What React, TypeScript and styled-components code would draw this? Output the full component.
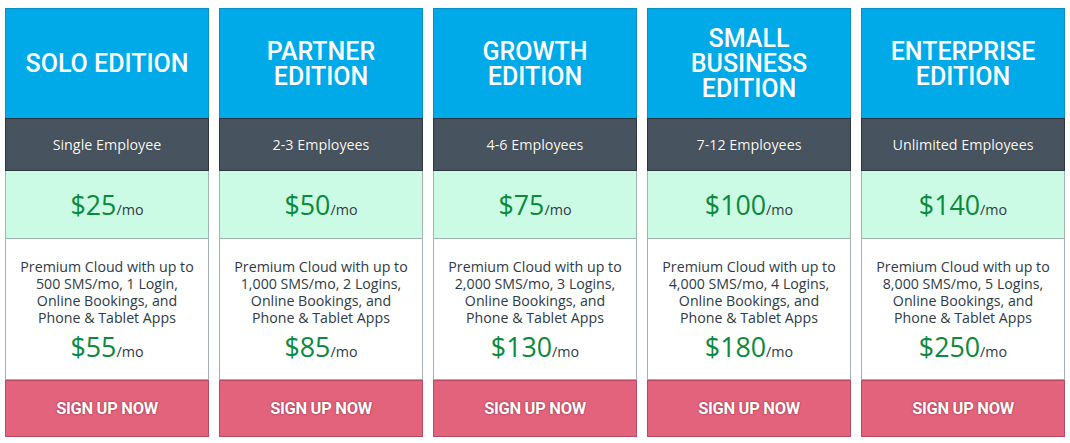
import React from "react";
import styled, { createGlobalStyle } from "styled-components";

const Global = createGlobalStyle`
  html, body { margin: 0; padding: 0; background: #ffffff; }
  body { font-family: "Open Sans", "Liberation Sans", sans-serif; }
`;

const Page = styled.div`
  display: grid;
  grid-template-columns: repeat(5, 204px);
  column-gap: 10px;
  padding: 8px 0 0 5px;
`;

const Card = styled.div`
  display: flex;
  flex-direction: column;
`;

const Header = styled.div`
  box-sizing: border-box;
  height: 110px;
  background: #00aae9;
  border: 1px solid #0a8fc4;
  border-bottom: none;
  display: flex;
  align-items: center;
  justify-content: center;
  text-align: center;
  padding: 0 10px 0;
  color: #ffffff;
  font-family: Roboto, "Liberation Sans", sans-serif;
  font-weight: 500;
  font-size: 25px;
  line-height: 25px;
  text-transform: uppercase;
`;

const Band = styled.div`
  box-sizing: border-box;
  height: 53px;
  background: #47545f;
  border: 1px solid #2c353d;
  display: flex;
  align-items: center;
  justify-content: center;
  color: #ffffff;
  font-size: 14.3px;
  text-shadow: 0 0 1px rgba(0, 0, 0, 0.6);
  padding-bottom: 1px;
`;

const PriceBox = styled.div`
  box-sizing: border-box;
  height: 68px;
  background: #ccfbe5;
  border: 1px solid #9eb5ad;
  border-top: none;
  display: flex;
  align-items: center;
  justify-content: center;
  padding-top: 5px;
`;

const Price = styled.div<{ $gap?: number }>`
  color: #0a8a3a;
  font-size: 26.8px;
  line-height: 32px;
  font-weight: 400;
  margin-top: ${(p) => p.$gap ?? 0}px;
`;

const Per = styled.span`
  color: #2e3a44;
  font-size: 14.3px;
`;

const Body = styled.div`
  box-sizing: border-box;
  height: 141px;
  background: #ffffff;
  border: 1px solid #a3aeb5;
  border-top: none;
  display: flex;
  flex-direction: column;
  align-items: center;
  padding: 19px 6px 0;
  text-align: center;
`;

const Desc = styled.div`
  color: #2e3a44;
  font-size: 14.2px;
  line-height: 17px;
`;

const Button = styled.div`
  box-sizing: border-box;
  height: 57px;
  background: #e2637b;
  border: 1px solid #b84960;
  display: flex;
  align-items: center;
  justify-content: center;
  color: #ffffff;
  font-family: Roboto, "Liberation Sans", sans-serif;
  font-weight: 700;
  font-size: 16.5px;
  letter-spacing: -0.3px;
  text-shadow: 0 0 2px rgba(110, 20, 40, 0.8);
  cursor: pointer;
`;

const plans = [
  { title: "Solo Edition", emp: "Single Employee", price: 25, sms: "500", logins: "1 Login", cloud: 55 },
  { title: "Partner Edition", emp: "2-3 Employees", price: 50, sms: "1,000", logins: "2 Logins", cloud: 85 },
  { title: "Growth Edition", emp: "4-6 Employees", price: 75, sms: "2,000", logins: "3 Logins", cloud: 130 },
  { title: "Small Business Edition", emp: "7-12 Employees", price: 100, sms: "4,000", logins: "4 Logins", cloud: 180 },
  { title: "Enterprise Edition", emp: "Unlimited Employees", price: 140, sms: "8,000", logins: "5 Logins", cloud: 250 },
];

export default function App() {
  return (
    <>
      <Global />
      <Page>
        {plans.map((p) => (
          <Card key={p.title}>
            <Header>{p.title}</Header>
            <Band>{p.emp}</Band>
            <PriceBox>
              <Price>
                ${p.price}
                <Per>/mo</Per>
              </Price>
            </PriceBox>
            <Body>
              <Desc>
                Premium Cloud with up to
                <br />
                {p.sms} SMS/mo, {p.logins},
                <br />
                Online Bookings, and
                <br />
                Phone &amp; Tablet Apps
              </Desc>
              <Price $gap={5}>
                ${p.cloud}
                <Per>/mo</Per>
              </Price>
            </Body>
            <Button>SIGN UP NOW</Button>
          </Card>
        ))}
      </Page>
    </>
  );
}
